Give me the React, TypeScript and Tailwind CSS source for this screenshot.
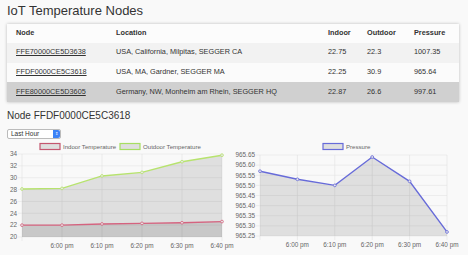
import React from 'react';

const nodes = [
  { id: 'FFE70000CE5D3638', location: 'USA, California, Milpitas, SEGGER CA', indoor: '22.75', outdoor: '22.3', pressure: '1007.35' },
  { id: 'FFDF0000CE5C3618', location: 'USA, MA, Gardner, SEGGER MA', indoor: '22.25', outdoor: '30.9', pressure: '965.64' },
  { id: 'FFE80000CE5D3605', location: 'Germany, NW, Monheim am Rhein, SEGGER HQ', indoor: '22.87', outdoor: '26.6', pressure: '997.61' },
];

const rowBg = ['bg-[#f2f2f2]', 'bg-[#fbfbfb]', 'bg-[#d0d0d0]'];

type Series = { values: number[]; color: string };

type ChartProps = {
  width: number;
  height: number;
  left: number;
  right: number;
  top: number;
  bottom: number;
  min: number;
  max: number;
  step: number;
  decimals: number;
  series: Series[];
  legend: { label: string; color: string; x: number }[];
};

const times = ['', '6:00 pm', '6:10 pm', '6:20 pm', '6:30 pm', '6:40 pm'];

function LineChart({ width, height, left, right, top, bottom, min, max, step, decimals, series, legend }: ChartProps) {
  const ticks: number[] = [];
  for (let v = min; v <= max + 1e-9; v += step) ticks.push(v);
  const sy = (v: number) => bottom - ((v - min) / (max - min)) * (bottom - top);
  const sx = (i: number) => left + (i * (right - left)) / (times.length - 1);

  return (
    <svg width={width} height={height} className="block" style={{ fontFamily: '"Liberation Sans", Arial, sans-serif' }}>
      {legend.map((l) => (
        <g key={l.label}>
          <rect x={l.x} y={4.5} width={20} height={6} fill="rgba(0,0,0,0.1)" stroke={l.color} strokeWidth={1.2} />
          <text x={l.x + 23} y={10} fontSize={6.1} fill="#666">{l.label}</text>
        </g>
      ))}
      {ticks.map((t) => (
        <g key={t}>
          <line x1={left - 4} x2={right} y1={sy(t)} y2={sy(t)} stroke="#e4e4e4" strokeWidth={0.6} />
          <text x={left - 5} y={sy(t) + 2.3} fontSize={6.4} fill="#666" textAnchor="end">{t.toFixed(decimals)}</text>
        </g>
      ))}
      {times.map((t, i) => (
        <g key={i}>
          <line x1={sx(i)} x2={sx(i)} y1={top} y2={bottom + 4} stroke="#e0e0e0" strokeWidth={0.6} />
          {t && <text x={sx(i)} y={bottom + 11} fontSize={6.4} fill="#666" textAnchor="middle">{t}</text>}
        </g>
      ))}
      {series.map((s, k) => {
        const pts = s.values.map((v, i) => `${sx(i)},${sy(v)}`).join(' ');
        return (
          <g key={k}>
            <polygon points={`${sx(0)},${bottom} ${pts} ${sx(s.values.length - 1)},${bottom}`} fill="rgba(0,0,0,0.1)" />
            <polyline points={pts} fill="none" stroke={s.color} strokeWidth={1.4} />
            {s.values.map((v, i) => (
              <circle key={i} cx={sx(i)} cy={sy(v)} r={1.4} fill="#e8e8e8" stroke={s.color} strokeWidth={0.8} />
            ))}
          </g>
        );
      })}
    </svg>
  );
}

export default function App() {
  return (
    <div className="w-[468px] h-[255px] overflow-hidden bg-[#f9f9f9] text-[#333] font-['Liberation_Sans',Arial,sans-serif]">
      <div className="px-[7px] pt-[3px]">
        <h1 className="text-[13px] leading-[16px]">IoT Temperature Nodes</h1>
        <table className="mt-[5px] w-[452px] border-collapse text-[7.3px] shadow-[0_0_3px_rgba(0,0,0,0.25)]">
          <thead>
            <tr className="bg-[#fcfcfc] h-[19px]">
              <th className="w-[100px] pl-[9px] text-left font-bold">Node</th>
              <th className="w-[212px] pl-[9px] text-left font-bold">Location</th>
              <th className="w-[39px] pl-[9px] text-left font-bold">Indoor</th>
              <th className="w-[47px] pl-[9px] text-left font-bold">Outdoor</th>
              <th className="pl-[9px] text-left font-bold">Pressure</th>
            </tr>
          </thead>
          <tbody>
            {nodes.map((n, i) => (
              <tr key={n.id} className={`${rowBg[i]} h-[19.7px]`}>
                <td className="pl-[9px]"><span className="underline">{n.id}</span></td>
                <td className="pl-[9px] whitespace-nowrap">{n.location}</td>
                <td className="pl-[9px]">{n.indoor}</td>
                <td className="pl-[9px]">{n.outdoor}</td>
                <td className="pl-[9px]">{n.pressure}</td>
              </tr>
            ))}
          </tbody>
        </table>
        <h2 className="mt-[7px] text-[10px] leading-[14px]">Node FFDF0000CE5C3618</h2>
        <div className="mt-[6px] flex h-[10px] w-[54px] items-center justify-between rounded-[2px] border border-[#bbb] bg-white pl-[3px] text-[6.5px]">
          <span>Last Hour</span>
          <span className="flex h-full w-[7px] items-center justify-center rounded-r-[2px] bg-[#3b82f6] text-[4px] leading-none text-white">⇕</span>
        </div>
      </div>
      <div className="grid grid-cols-2">
        <LineChart
          width={234}
          height={116}
          left={22}
          right={222}
          top={15}
          bottom={98}
          min={20}
          max={34}
          step={2}
          decimals={0}
          series={[
            { values: [28.1, 28.2, 30.3, 30.9, 32.7, 33.8], color: '#b7e36e' },
            { values: [22.0, 22.0, 22.2, 22.3, 22.4, 22.6], color: '#d5637f' },
          ]}
          legend={[
            { label: 'Indoor Temperature', color: '#c4566f', x: 40 },
            { label: 'Outdoor Temperature', color: '#a6de62', x: 120 },
          ]}
        />
        <LineChart
          width={234}
          height={116}
          left={26}
          right={213}
          top={16}
          bottom={97}
          min={965.25}
          max={965.65}
          step={0.05}
          decimals={2}
          series={[{ values: [965.57, 965.53, 965.5, 965.64, 965.52, 965.27], color: '#676bd9' }]}
          legend={[{ label: 'Pressure', color: '#676bd9', x: 89 }]}
        />
      </div>
    </div>
  );
}
